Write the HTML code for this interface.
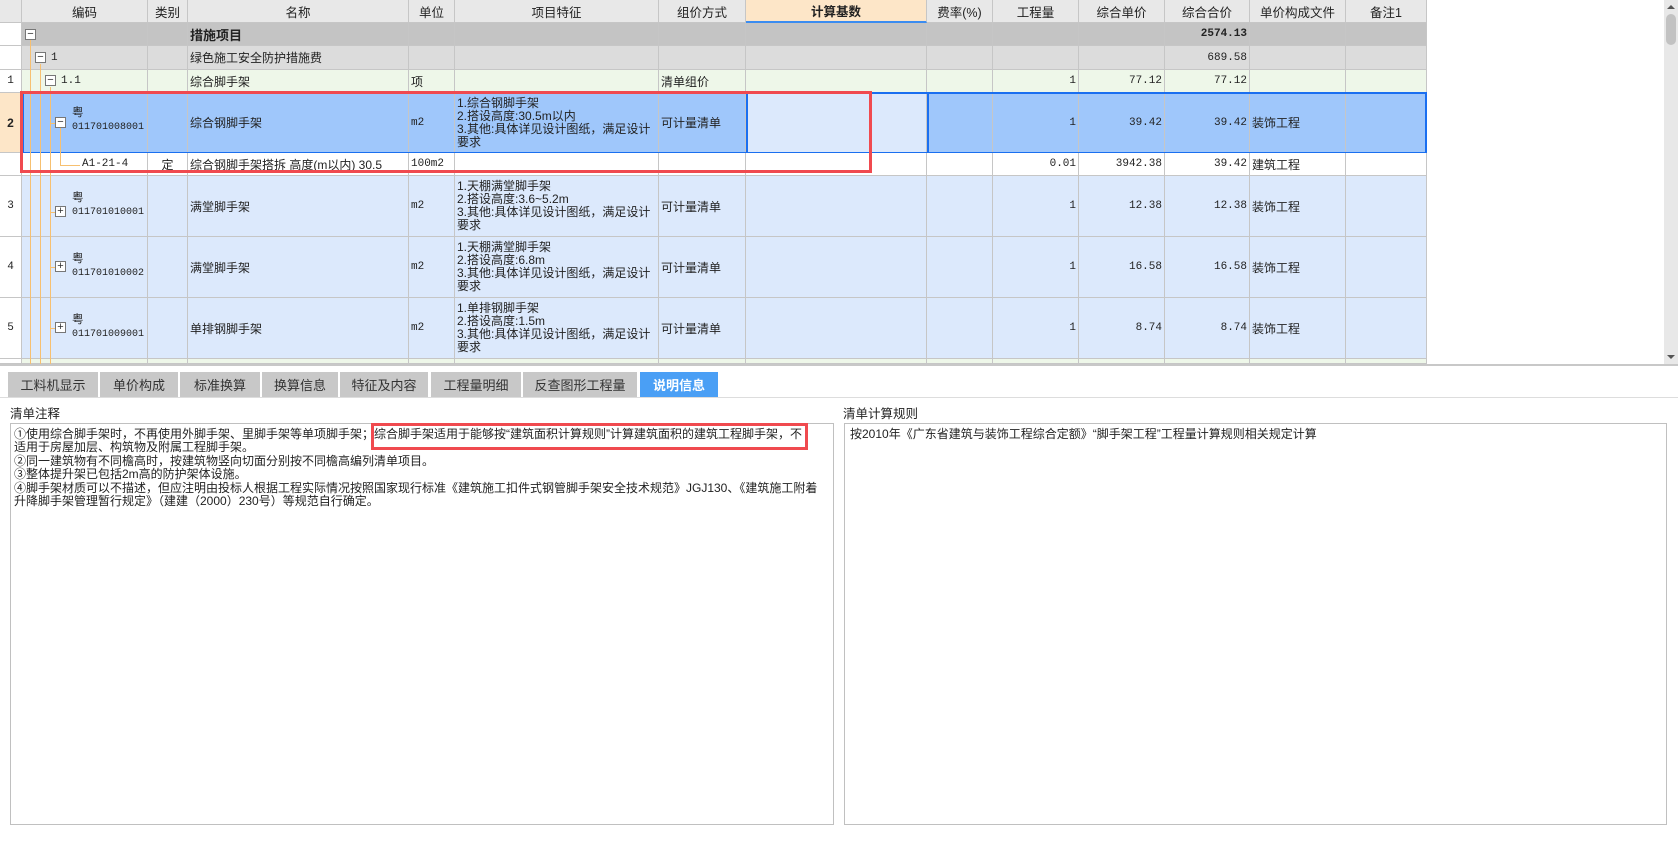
<!DOCTYPE html>
<html><head><meta charset="utf-8"><style>
*{box-sizing:border-box;margin:0;padding:0}
body{width:1678px;height:845px;background:#fff;position:relative;overflow:hidden;font-family:"Liberation Sans","Noto Sans CJK SC",sans-serif;font-size:12px;color:#222}
.row{position:absolute;left:0;display:flex;width:1427px}
.c{border-right:1px solid #c6c6c6;border-bottom:1px solid #c6c6c6;height:100%;padding:0 2px;display:flex;align-items:center;white-space:nowrap;overflow:hidden;position:relative}
.w1{overflow:visible}
.r{justify-content:flex-end;font-family:"Liberation Mono","Noto Sans CJK SC",monospace;font-size:11px}
.m{font-family:"Liberation Mono","Noto Sans CJK SC",monospace;font-size:11px}
.ctr{justify-content:center}
.w0{width:22px;justify-content:center}.w1{width:126px}.w2{width:40px}.w3{width:221px}.w4{width:46px}.w5{width:204px}.w6{width:87px}.w7{width:181px}.w8{width:66px}.w9{width:86px}.w10{width:86px}.w11{width:85px}.w12{width:96px}.w13{width:81px}
.hdr .c{background:#e8e8e8;justify-content:center;font-size:12.5px}
.feat{white-space:normal;line-height:13px;font-size:12px;align-items:center;padding-right:4px}
.bx{position:absolute;width:11px;height:11px;border:1px solid #777;background:#fff;font-size:11px;line-height:8px;text-align:center;color:#333}
.vl{position:absolute;width:1px;background:#f7c070}
.hl{position:absolute;height:1px;background:#f7c070}
.tab{position:absolute;top:372px;height:25px;background:#c8c8c8;font-size:13px;color:#333;display:flex;align-items:center;justify-content:center}
.code{position:absolute;left:72px;line-height:13px;font-size:11.5px;z-index:2}
.code .m{font-size:10px}
</style></head><body>

<div class="row hdr" style="top:0;height:23px">
<div class="c w0"></div><div class="c w1">编码</div><div class="c w2">类别</div><div class="c w3">名称</div><div class="c w4">单位</div><div class="c w5">项目特征</div><div class="c w6">组价方式</div><div class="c w7" style="background:#fde6c8;font-weight:bold;border-bottom:2px solid #3b8cf0">计算基数</div><div class="c w8">费率(%)</div><div class="c w9">工程量</div><div class="c w10">综合单价</div><div class="c w11">综合合价</div><div class="c w12">单价构成文件</div><div class="c w13">备注1</div>
</div>
<div class="row" style="top:23px;height:23px;background:#c4c4c4">
<div class="c w0" style="background:#fff"></div><div class="c w1"></div><div class="c w2"></div><div class="c w3" style="font-weight:bold;font-size:13px">措施项目</div><div class="c w4"></div><div class="c w5"></div><div class="c w6"></div><div class="c w7"></div><div class="c w8"></div><div class="c w9"></div><div class="c w10"></div><div class="c w11 r" style="font-weight:bold">2574.13</div><div class="c w12"></div><div class="c w13"></div>
</div>
<div class="row" style="top:46px;height:24px;background:#dcdcdc">
<div class="c w0" style="background:#fff"></div><div class="c w1"><span class="m" style="position:absolute;left:29px">1</span></div><div class="c w2"></div><div class="c w3">绿色施工安全防护措施费</div><div class="c w4"></div><div class="c w5"></div><div class="c w6"></div><div class="c w7"></div><div class="c w8"></div><div class="c w9"></div><div class="c w10"></div><div class="c w11 r">689.58</div><div class="c w12"></div><div class="c w13"></div>
</div>
<div class="row" style="top:70px;height:23px;background:#eef7e9">
<div class="c w0 m" style="background:#fff">1</div><div class="c w1"><span class="m" style="position:absolute;left:39px">1.1</span></div><div class="c w2"></div><div class="c w3">综合脚手架</div><div class="c w4">项</div><div class="c w5"></div><div class="c w6">清单组价</div><div class="c w7"></div><div class="c w8"></div><div class="c w9 r">1</div><div class="c w10 r">77.12</div><div class="c w11 r">77.12</div><div class="c w12"></div><div class="c w13"></div>
</div>
<div class="row" style="top:93px;height:60px;background:#9fc7fb">
<div class="c w0" style="background:#fde6c8;font-weight:bold">2</div><div class="c w1"><div class="code" style="left:50px;top:14px">粤<br><span class="m">011701008001</span></div></div><div class="c w2"></div><div class="c w3">综合钢脚手架</div><div class="c w4 m">m2</div><div class="c w5 feat">1.综合钢脚手架<br>2.搭设高度:30.5m以内<br>3.其他:具体详见设计图纸，满足设计要求</div><div class="c w6">可计量清单</div><div class="c w7" style="background:#dce9fc;border-left:2px solid #1a6ff0"></div><div class="c w8" style="border-left:2px solid #1a6ff0"></div><div class="c w9 r">1</div><div class="c w10 r">39.42</div><div class="c w11 r">39.42</div><div class="c w12">装饰工程</div><div class="c w13"></div>
</div>
<div style="position:absolute;left:22px;top:92px;width:1405px;height:62px;border:2px solid #1a6ff0"></div>
<div class="row" style="top:153px;height:23px;background:#fff">
<div class="c w0"></div><div class="c w1"><span class="m" style="position:absolute;left:60px">A1-21-4</span></div><div class="c w2 ctr">定</div><div class="c w3">综合钢脚手架搭拆 高度(m以内) 30.5</div><div class="c w4 m">100m2</div><div class="c w5"></div><div class="c w6"></div><div class="c w7"></div><div class="c w8"></div><div class="c w9 r">0.01</div><div class="c w10 r">3942.38</div><div class="c w11 r">39.42</div><div class="c w12">建筑工程</div><div class="c w13"></div>
</div>
<div class="row" style="top:176px;height:61px;background:#dce9fc">
<div class="c w0 m" style="background:#fff">3</div><div class="c w1"><div class="code" style="left:50px;top:16px">粤<br><span class="m">011701010001</span></div></div><div class="c w2"></div><div class="c w3">满堂脚手架</div><div class="c w4 m">m2</div><div class="c w5 feat">1.天棚满堂脚手架<br>2.搭设高度:3.6~5.2m<br>3.其他:具体详见设计图纸，满足设计要求</div><div class="c w6">可计量清单</div><div class="c w7"></div><div class="c w8"></div><div class="c w9 r">1</div><div class="c w10 r">12.38</div><div class="c w11 r">12.38</div><div class="c w12">装饰工程</div><div class="c w13"></div>
</div>
<div class="row" style="top:237px;height:61px;background:#dce9fc">
<div class="c w0 m" style="background:#fff">4</div><div class="c w1"><div class="code" style="left:50px;top:16px">粤<br><span class="m">011701010002</span></div></div><div class="c w2"></div><div class="c w3">满堂脚手架</div><div class="c w4 m">m2</div><div class="c w5 feat">1.天棚满堂脚手架<br>2.搭设高度:6.8m<br>3.其他:具体详见设计图纸，满足设计要求</div><div class="c w6">可计量清单</div><div class="c w7"></div><div class="c w8"></div><div class="c w9 r">1</div><div class="c w10 r">16.58</div><div class="c w11 r">16.58</div><div class="c w12">装饰工程</div><div class="c w13"></div>
</div>
<div class="row" style="top:298px;height:61px;background:#dce9fc">
<div class="c w0 m" style="background:#fff">5</div><div class="c w1"><div class="code" style="left:50px;top:16px">粤<br><span class="m">011701009001</span></div></div><div class="c w2"></div><div class="c w3">单排钢脚手架</div><div class="c w4 m">m2</div><div class="c w5 feat">1.单排钢脚手架<br>2.搭设高度:1.5m<br>3.其他:具体详见设计图纸，满足设计要求</div><div class="c w6">可计量清单</div><div class="c w7"></div><div class="c w8"></div><div class="c w9 r">1</div><div class="c w10 r">8.74</div><div class="c w11 r">8.74</div><div class="c w12">装饰工程</div><div class="c w13"></div>
</div>
<div class="row" style="top:359px;height:5px;background:#eef7e9">
<div class="c w0" style="background:#fff"></div><div class="c w1"></div><div class="c w2"></div><div class="c w3"></div><div class="c w4"></div><div class="c w5"></div><div class="c w6"></div><div class="c w7"></div><div class="c w8"></div><div class="c w9"></div><div class="c w10"></div><div class="c w11"></div><div class="c w12"></div><div class="c w13"></div>
</div>

<div class="vl" style="left:30px;top:40px;height:324px"></div>
<div class="vl" style="left:40px;top:64px;height:300px"></div>
<div class="vl" style="left:50px;top:87px;height:277px"></div>
<div class="hl" style="left:40px;top:58px;width:6px"></div>
<div class="hl" style="left:50px;top:81px;width:6px"></div>
<div class="vl" style="left:60px;top:128px;height:38px"></div>
<div class="hl" style="left:60px;top:165px;width:20px"></div>
<div class="hl" style="left:50px;top:123px;width:5px"></div>
<div class="hl" style="left:50px;top:212px;width:5px"></div>
<div class="hl" style="left:50px;top:267px;width:5px"></div>
<div class="hl" style="left:50px;top:328px;width:5px"></div>
<div class="bx" style="left:25px;top:29px">−</div>
<div class="bx" style="left:35px;top:52px">−</div>
<div class="bx" style="left:45px;top:75px">−</div>
<div class="bx" style="left:55px;top:117px">−</div>
<div class="bx" style="left:55px;top:206px">+</div>
<div class="bx" style="left:55px;top:261px">+</div>
<div class="bx" style="left:55px;top:322px">+</div>

<div style="position:absolute;left:20px;top:91px;width:852px;height:82px;border:3px solid #f04a4f;z-index:3"></div>

<div style="position:absolute;left:1664px;top:0;width:14px;height:364px;background:#e8e8e8"></div>
<div style="position:absolute;left:1667px;top:5px;width:0;height:0;border-left:4px solid transparent;border-right:4px solid transparent;border-bottom:4px solid #555"></div>
<div style="position:absolute;left:1666px;top:14px;width:10px;height:31px;border-radius:5px;background:#c2c2c2"></div>
<div style="position:absolute;left:1667px;top:355px;width:0;height:0;border-left:4px solid transparent;border-right:4px solid transparent;border-top:4px solid #555"></div>

<div style="position:absolute;left:0;top:364px;width:1678px;height:2px;background:#c8c8c8"></div>

<div class="tab" style="left:8px;width:90px">工料机显示</div>
<div class="tab" style="left:100px;width:78px">单价构成</div>
<div class="tab" style="left:180px;width:80px">标准换算</div>
<div class="tab" style="left:262px;width:76px">换算信息</div>
<div class="tab" style="left:340px;width:88px">特征及内容</div>
<div class="tab" style="left:431px;width:90px">工程量明细</div>
<div class="tab" style="left:523px;width:114px">反查图形工程量</div>
<div class="tab" style="left:640px;width:78px;background:#4a9ff5;color:#fff;font-weight:bold">说明信息</div>
<div style="position:absolute;left:0;top:397px;width:1678px;height:1px;background:#ddd"></div>

<div style="position:absolute;left:10px;top:403px;font-size:12.5px">清单注释</div>
<div style="position:absolute;left:843px;top:403px;font-size:12.5px">清单计算规则</div>

<div style="position:absolute;left:10px;top:423px;width:824px;height:402px;border:1px solid #c0c0c0;padding:4px 3px;font-size:12px;line-height:13.4px;white-space:nowrap">①使用综合脚手架时，不再使用外脚手架、里脚手架等单项脚手架；综合脚手架适用于能够按“建筑面积计算规则”计算建筑面积的建筑工程脚手架，不<br>适用于房屋加层、构筑物及附属工程脚手架。<br>②同一建筑物有不同檐高时，按建筑物竖向切面分别按不同檐高编列清单项目。<br>③整体提升架已包括2m高的防护架体设施。<br>④脚手架材质可以不描述，但应注明由投标人根据工程实际情况按照国家现行标准《建筑施工扣件式钢管脚手架安全技术规范》JGJ130、《建筑施工附着<br>升降脚手架管理暂行规定》（建建（2000）230号）等规范自行确定。</div>
<div style="position:absolute;left:371px;top:423px;width:437px;height:27px;border:3px solid #f04a4f"></div>

<div style="position:absolute;left:844px;top:423px;width:823px;height:402px;border:1px solid #c0c0c0;padding:4px 5px;font-size:12px;line-height:13.4px;white-space:nowrap">按2010年《广东省建筑与装饰工程综合定额》“脚手架工程”工程量计算规则相关规定计算</div>
</body></html>
